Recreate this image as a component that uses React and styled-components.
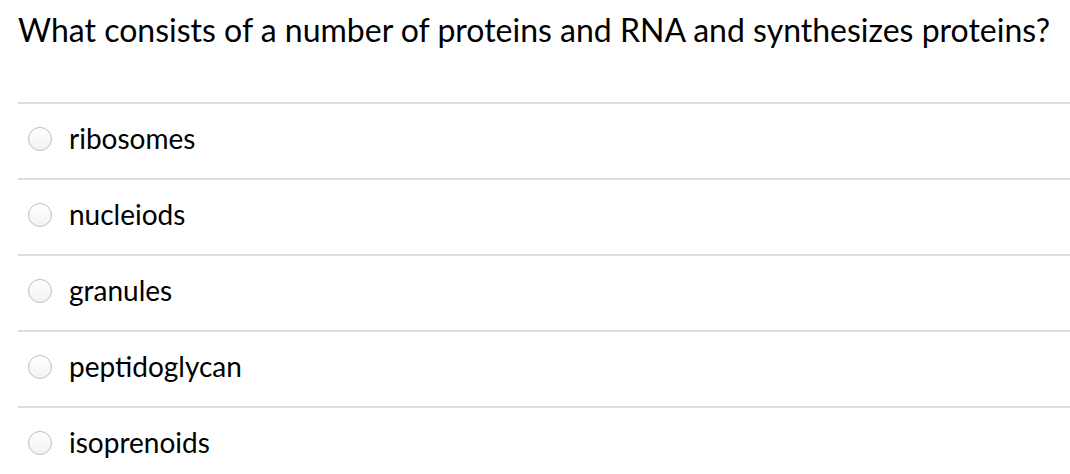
import React from "react";
import styled, { createGlobalStyle } from "styled-components";

const GlobalStyle = createGlobalStyle`
  body {
    margin: 0;
    background: #fff;
    font-family: Lato, "Liberation Sans", sans-serif;
    color: #000;
  }
`;

const Wrapper = styled.div`
  padding: 10px 0 0 18px;
`;

const Question = styled.h2`
  margin: 0;
  font-size: 32px;
  font-weight: 400;
  line-height: 40px;
`;

const Answers = styled.ul`
  list-style: none;
  margin: 52px 0 0;
  padding: 0;
`;

const Answer = styled.li`
  display: flex;
  align-items: center;
  gap: 17px;
  height: 74px;
  border-top: 2px solid #dcdcdc;
  padding-left: 10px;
  font-size: 28px;
  line-height: 34px;
`;

const Label = styled.span`
  padding-bottom: 6px;
`;

const Radio = styled.span`
  width: 24px;
  height: 24px;
  margin-top: -4px;
  border-radius: 50%;
  border: 1px solid #bdbdbd;
  box-sizing: border-box;
  background: linear-gradient(#fff, #f2f2f2);
  flex-shrink: 0;
`;

const options = ["ribosomes", "nucleiods", "granules", "peptidoglycan", "isoprenoids"];

export default function App() {
  return (
    <Wrapper>
      <GlobalStyle />
      <Question>What consists of a number of proteins and RNA and synthesizes proteins?</Question>
      <Answers>
        {options.map((o) => (
          <Answer key={o}>
            <Radio />
            <Label>{o}</Label>
          </Answer>
        ))}
      </Answers>
    </Wrapper>
  );
}
